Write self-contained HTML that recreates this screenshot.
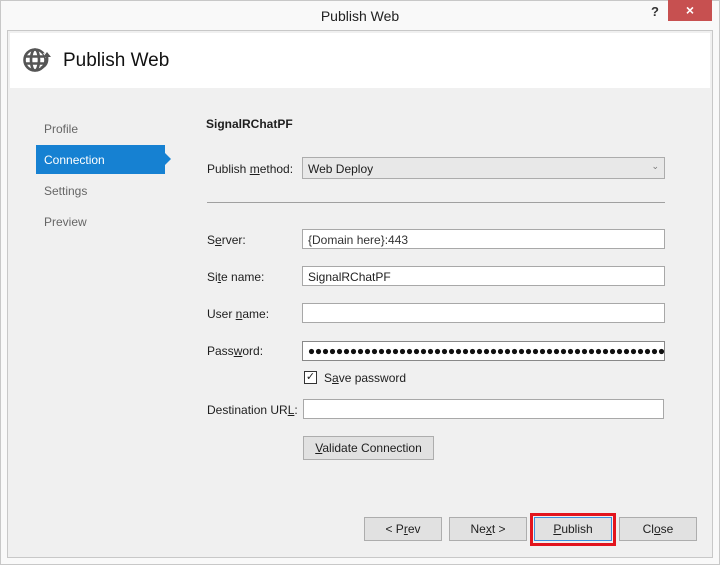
<!DOCTYPE html>
<html><head><style>
*{margin:0;padding:0;box-sizing:border-box}
body{width:720px;height:565px;background:#f9f9f9;font-family:"Liberation Sans",sans-serif;font-size:12px;color:#1e1e1e;position:relative;overflow:hidden}
.a{position:absolute}
.win{left:0;top:0;width:720px;height:565px;border:1px solid #c8c8c8}
.in{border:1px solid #a8a8a8;background:#fff;height:20px;font-size:12px;padding:3px 5px}
.lbl{left:207px;font-size:12px}
.btn{background:#e1e1e1;border:1px solid #adadad;height:24px;text-align:center;line-height:22px;font-size:12px}
u{text-decoration:underline}
</style></head><body>
<div class="a win"></div>
<div class="a" style="left:0;top:8px;width:720px;text-align:center;font-size:14px;color:#222">Publish Web</div>
<div class="a" style="left:651px;top:4px;font-size:13px;font-weight:bold;color:#333">?</div>
<div class="a" style="left:668px;top:0;width:44px;height:21px;background:#c75050;color:#fff;text-align:center;font-size:14px;line-height:20px;font-weight:bold">×</div>
<div class="a" style="left:7px;top:30px;width:706px;height:528px;border:1px solid #c8c8c8;background:#f0f0f0"></div>
<div class="a" style="left:10px;top:33px;width:700px;height:55px;background:#fff"></div>
<svg class="a" style="left:22px;top:45px" width="30" height="30" viewBox="0 0 30 30">
<g fill="none" stroke="#555" stroke-width="2.6"><circle cx="13" cy="15" r="10.5"/><ellipse cx="13" cy="15" rx="4" ry="10.5"/><line x1="3" y1="11.5" x2="23" y2="11.5"/><line x1="3" y1="18.5" x2="23" y2="18.5"/></g>
<path d="M21 8 L29 10 L26 17 Z" fill="#fff"/><path d="M19 23 Q26 20 25 12" fill="none" stroke="#555" stroke-width="2.6"/><path d="M21 12 L25 7 L29 12 Z" fill="#555"/>
</svg>
<div class="a" style="left:63px;top:50px;font-size:19px;color:#111">Publish Web</div>
<div class="a" style="left:44px;top:122px;color:#666">Profile</div>
<div class="a" style="left:36px;top:145px;width:129px;height:29px;background:#1681d2"></div>
<div class="a" style="left:165px;top:153px;width:0;height:0;border-top:6px solid transparent;border-bottom:6px solid transparent;border-left:6px solid #1681d2"></div>
<div class="a" style="left:44px;top:153px;color:#fff">Connection</div>
<div class="a" style="left:44px;top:184px;color:#666">Settings</div>
<div class="a" style="left:44px;top:215px;color:#666">Preview</div>
<div class="a" style="left:206px;top:117px;font-weight:bold">SignalRChatPF</div>
<div class="a lbl" style="top:162px">Publish <u>m</u>ethod:</div>
<div class="a" style="left:302px;top:157px;width:363px;height:22px;border:1px solid #acacac;background:#e8e8e8;padding:4px 5px">Web Deploy<span style="position:absolute;right:5px;top:3px;font-size:9px;color:#777">⌄</span></div>
<div class="a" style="left:207px;top:202px;width:458px;height:1px;background:#a0a0a0"></div>
<div class="a lbl" style="top:233px">S<u>e</u>rver:</div>
<div class="a in" style="left:302px;top:229px;width:363px;color:#333">{Domain here}:443</div>
<div class="a lbl" style="top:270px">Si<u>t</u>e name:</div>
<div class="a in" style="left:302px;top:266px;width:363px">SignalRChatPF</div>
<div class="a lbl" style="top:307px">User <u>n</u>ame:</div>
<div class="a in" style="left:302px;top:303px;width:363px"></div>
<div class="a lbl" style="top:344px">Pass<u>w</u>ord:</div>
<div class="a in" style="left:302px;top:341px;width:363px;border-color:#888;padding:0"><svg width="361" height="18" style="display:block"><defs><pattern id="d" width="7" height="18" patternUnits="userSpaceOnUse" x="5"><circle cx="3.5" cy="9.5" r="2.6" fill="#111"/></pattern></defs><rect x="5" y="0" width="357" height="18" fill="url(#d)"/></svg></div>
<div class="a" style="left:304px;top:371px;width:13px;height:13px;border:1px solid #333;background:#fff;font-size:11px;line-height:11px;text-align:center">✓</div>
<div class="a" style="left:324px;top:371px">S<u>a</u>ve password</div>
<div class="a lbl" style="top:403px">Destination UR<u>L</u>:</div>
<div class="a in" style="left:303px;top:399px;width:361px"></div>
<div class="a btn" style="left:303px;top:436px;width:131px"><u>V</u>alidate Connection</div>
<div class="a btn" style="left:364px;top:517px;width:78px">&lt; P<u>r</u>ev</div>
<div class="a btn" style="left:449px;top:517px;width:78px">Ne<u>x</u>t &gt;</div>
<div class="a" style="left:530px;top:513px;width:86px;height:33px;border:3px solid #e2151e"></div>
<div class="a btn" style="left:534px;top:517px;width:78px;border-color:#3c8fdc"><u>P</u>ublish</div>
<div class="a btn" style="left:619px;top:517px;width:78px">Cl<u>o</u>se</div>
</body></html>
